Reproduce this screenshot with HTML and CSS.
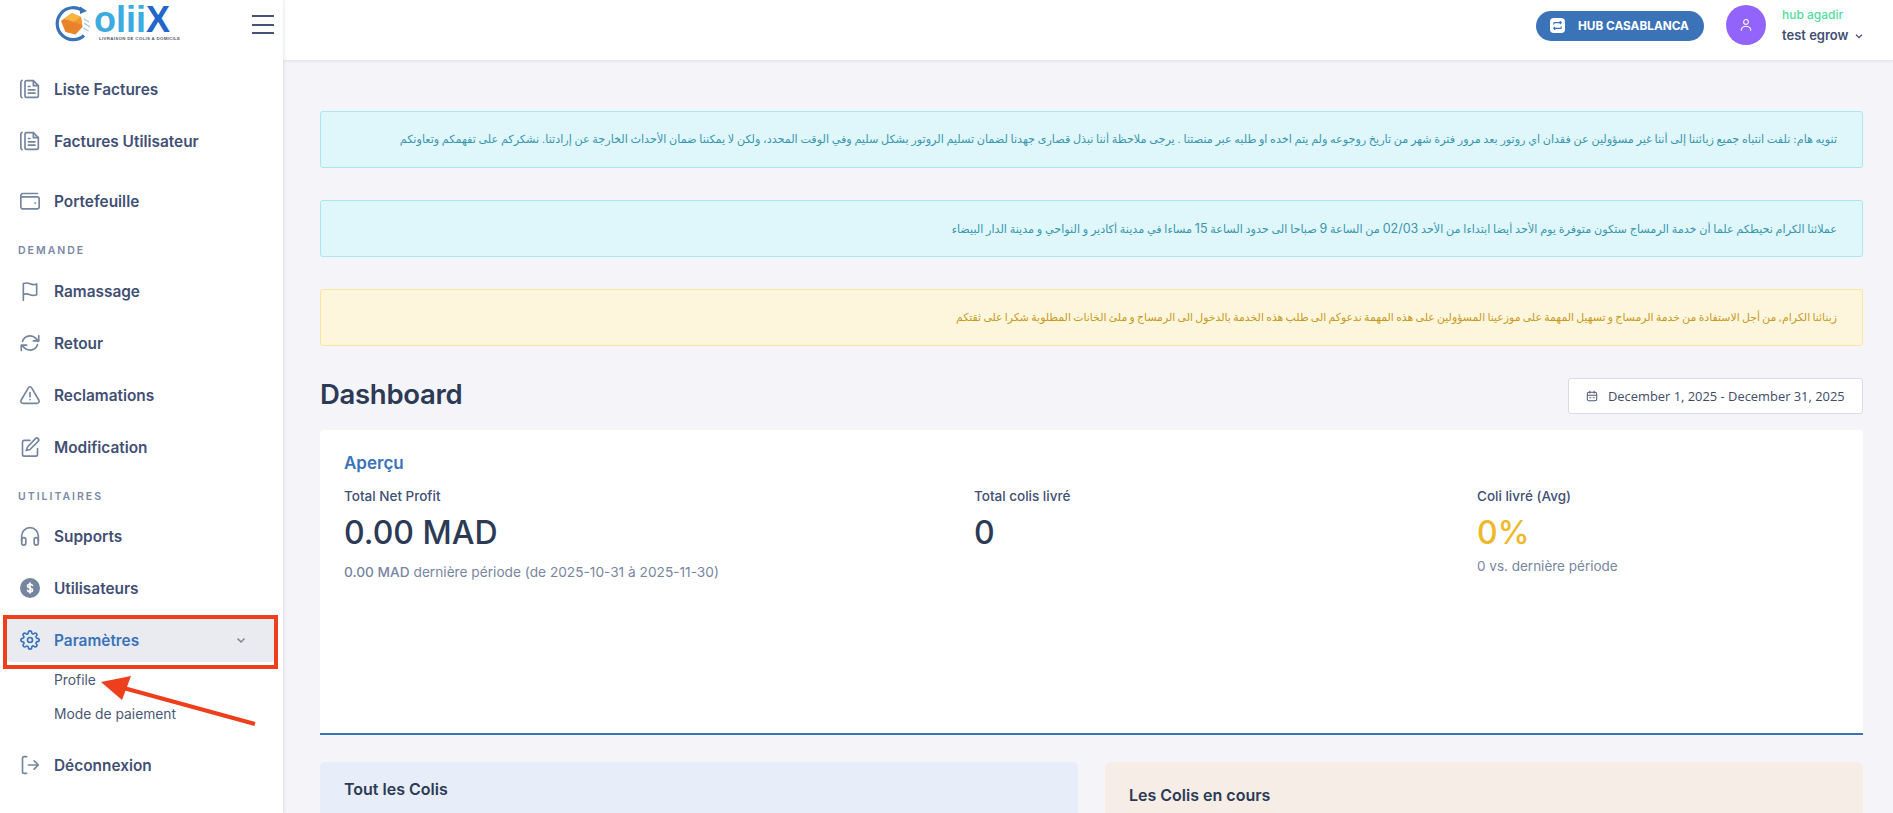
FILE: index.html
```html
<!DOCTYPE html>
<html lang="fr">
<head>
<meta charset="utf-8">
<title>Coliix Dashboard</title>
<link rel="stylesheet" href="styles.css">
</head>
<body>
<div class="app">
  <aside class="sidebar">
    <div class="brand">
      <div class="logo">
        <svg class="logo-mark" viewBox="0 0 38 36" width="38" height="36">
          <path d="M29 5A16 16 0 1 0 30 29.500" fill="none" stroke="#3a73b8" stroke-width="3.200"/>
          <path d="M26 0.500l7 4.500-7 3z" fill="#3a73b8"/>
          <path d="M18 7l9 4 1.500 10-7 7.500-10-2.500L7 15z" fill="#e8832a"/>
          <path d="M10 13l8-6 9 4-7 5z" fill="#f7b53f"/>
          <path d="M20 16l7-5 1 8z" fill="#ef9a30"/>
          <path d="M30 13l5 3M30 17l6 4M29.500 22l5 3" stroke="#a7c8e8" stroke-width="1.400" fill="none"/>
        </svg>
        <div class="logo-text">
          <div class="logo-word"><span class="logo-light">olii</span><span class="logo-dark">X</span></div>
          <div class="logo-tag">LIVRAISON DE COLIS A DOMICILE</div>
        </div>
      </div>
      <div class="burger"><span></span><span></span><span></span></div>
    </div>
    <nav class="nav">
      <a class="item first">
        <svg class="ico" viewBox="0 0 24 24"><path d="M2.500 1.500C1.500 2 1 3 1 4v16c0 1 .5 2 1.500 2.500"/><path d="M6 4a2 2 0 0 1 2-2h8l6 6v12a2 2 0 0 1-2 2H8a2 2 0 0 1-2-2z"/><path d="M10 9h2M10 13h8M10 17h8M16 2v6h6"/></svg>
        <span>Liste Factures</span>
      </a>
      <a class="item">
        <svg class="ico" viewBox="0 0 24 24"><path d="M2.500 1.500C1.500 2 1 3 1 4v16c0 1 .5 2 1.500 2.500"/><path d="M6 4a2 2 0 0 1 2-2h8l6 6v12a2 2 0 0 1-2 2H8a2 2 0 0 1-2-2z"/><path d="M10 9h2M10 13h8M10 17h8M16 2v6h6"/></svg>
        <span>Factures Utilisateur</span>
      </a>
      <a class="item wallet">
        <svg class="ico" viewBox="0 0 24 24"><path d="M21 3H3.500A2.500 2.500 0 0 0 1 5.500V19a2.500 2.500 0 0 0 2.500 2.500h17A2.500 2.500 0 0 0 23 19V9.500A2.500 2.500 0 0 0 20.500 7H1.500"/><path d="M18 14.500h.5"/></svg>
        <span>Portefeuille</span>
      </a>
      <div class="section">DEMANDE</div>
      <a class="item">
        <svg class="ico" viewBox="0 0 24 24"><path d="M4 23V3c3-1 5.500-.8 8 .3s5 1.500 8 .2v13c-3 1.200-5.500 1-8-.1s-5-1.300-8-.4"/></svg>
        <span>Ramassage</span>
      </a>
      <a class="item">
        <svg class="ico" viewBox="0 0 24 24"><path d="M3 10a9.500 9.500 0 0 1 16-3.500l3 3.500M22.500 3v6.500H16M21 14a9.500 9.500 0 0 1-16 3.500L2 14.500M1.500 21v-6.500H8"/></svg>
        <span>Retour</span>
      </a>
      <a class="item">
        <svg class="ico" viewBox="0 0 24 24"><path d="M10 3.500L1.500 18c-1.200 2.200 0 4 2.500 4h16c2.500 0 3.700-1.800 2.500-4L14 3.500c-1-1.900-3-1.900-4 0z"/><path d="M12 9v5M12 17.500v.2"/></svg>
        <span>Reclamations</span>
      </a>
      <a class="item">
        <svg class="ico" viewBox="0 0 24 24"><path d="M12 4H5a2 2 0 0 0-2 2v15a2 2 0 0 0 2 2h14a2 2 0 0 0 2-2v-7"/><path d="M18.500 2a2.300 2.300 0 0 1 3.300 3.300L12 15l-4.500 1.200L9 12z"/></svg>
        <span>Modification</span>
      </a>
      <div class="section util">UTILITAIRES</div>
      <a class="item">
        <svg class="ico" viewBox="0 0 24 24"><path d="M2 18v-6a10 10 0 0 1 20 0v6"/><rect x="2" y="14" width="5" height="9" rx="2.500"/><rect x="17" y="14" width="5" height="9" rx="2.500"/></svg>
        <span>Supports</span>
      </a>
      <a class="item">
        <svg class="ico" viewBox="0 0 24 24"><circle class="ico-fill" cx="12" cy="12" r="12"/><path class="ico-knock" d="M15 9c-.5-1-1.500-1.500-3-1.500-1.700 0-3 .8-3 2.200 0 3 6 1.600 6 4.600 0 1.400-1.300 2.200-3 2.200-1.500 0-2.600-.6-3-1.600M12 6v12"/></svg>
        <span>Utilisateurs</span>
      </a>
      <div class="active-wrap">
        <a class="item active">
          <svg class="ico" viewBox="0 0 24 24"><circle cx="12" cy="12" r="3"/><path d="M19.400 15a1.650 1.650 0 0 0 .33 1.820l.06.06a2 2 0 0 1 0 2.830 2 2 0 0 1-2.830 0l-.06-.06a1.650 1.650 0 0 0-1.820-.33 1.650 1.650 0 0 0-1 1.510V21a2 2 0 0 1-2 2 2 2 0 0 1-2-2v-.09A1.650 1.650 0 0 0 9 19.400a1.650 1.650 0 0 0-1.820.33l-.06.06a2 2 0 0 1-2.830 0 2 2 0 0 1 0-2.830l.06-.06a1.650 1.650 0 0 0 .33-1.820 1.650 1.650 0 0 0-1.510-1H3a2 2 0 0 1-2-2 2 2 0 0 1 2-2h.09A1.650 1.650 0 0 0 4.600 9a1.650 1.650 0 0 0-.33-1.820l-.06-.06a2 2 0 0 1 0-2.830 2 2 0 0 1 2.830 0l.06.06a1.650 1.650 0 0 0 1.820.33H9a1.650 1.650 0 0 0 1-1.510V3a2 2 0 0 1 2-2 2 2 0 0 1 2 2v.09a1.650 1.650 0 0 0 1 1.510 1.650 1.650 0 0 0 1.820-.33l.06-.06a2 2 0 0 1 2.830 0 2 2 0 0 1 0 2.830l-.06.06a1.650 1.650 0 0 0-.33 1.820V9a1.650 1.650 0 0 0 1.510 1H21a2 2 0 0 1 2 2 2 2 0 0 1-2 2h-.09a1.650 1.650 0 0 0-1.510 1z"/></svg>
          <span>Paramètres</span>
          <svg class="chev" viewBox="0 0 12 12"><path d="M2.500 4.500L6 8l3.500-3.500"/></svg>
        </a>
      </div>
      <a class="sub">Profile</a>
      <a class="sub">Mode de paiement</a>
      <a class="item last">
        <svg class="ico" viewBox="0 0 24 24"><path d="M8 2H5a2 2 0 0 0-2 2v16a2 2 0 0 0 2 2h3M10 12h12M17 7l5 5-5 5"/></svg>
        <span>Déconnexion</span>
      </a>
    </nav>
  </aside>

  <div class="main">
    <header class="topbar">
      <a class="hub-btn">
        <svg class="hub-ico" viewBox="0 0 16 16"><rect x="0" y="0" width="16" height="16" rx="4" fill="#fff"/><path d="M4 7V6a1 1 0 0 1 1-1h7M10.500 3.500L12 5l-1.500 1.500M12 9v1a1 1 0 0 1-1 1H4M5.500 9.500L4 11l1.500 1.500" fill="none" stroke="#3a73b8" stroke-width="1.300"/></svg>
        <span>HUB CASABLANCA</span>
      </a>
      <div class="avatar">
        <svg viewBox="0 0 16 16" width="14" height="14"><circle cx="8" cy="4.500" r="2.700"/><path d="M2.500 14.500c0-3 2.500-5 5.500-5s5.500 2 5.500 5"/></svg>
      </div>
      <div class="user">
        <div class="user-hub">hub agadir</div>
        <div class="user-name">test egrow
          <svg class="user-chev" viewBox="0 0 12 12"><path d="M2.500 4.500L6 8l3.500-3.500"/></svg>
        </div>
      </div>
    </header>

    <main class="content">
      <div class="alert info a1" dir="rtl">تنويه هام: نلفت انتباه جميع زبائننا إلى أننا غير مسؤولين عن فقدان اي روتور بعد مرور فترة شهر من تاريخ روجوعه ولم يتم اخده او طلبه عبر منصتنا . يرجى ملاحظة أننا نبذل قصارى جهدنا لضمان تسليم الروتور بشكل سليم وفي الوقت المحدد، ولكن لا يمكننا ضمان الأحداث الخارجة عن إرادتنا. نشكركم على تفهمكم وتعاونكم</div>
      <div class="alert info a2" dir="rtl"><span>عملائنا الكرام نحيطكم علما أن خدمة الرمساج ستكون متوفرة يوم الأحد أيضا ابتداءا من الأحد <span class="num">02/03</span> من الساعة <span class="num">9</span> صباحا الى حدود الساعة <span class="num">15</span> مساءا في مدينة أكادير و النواحي و مدينة الدار البيضاء</span></div>
      <div class="alert warn a3" dir="rtl">زبنائنا الكرام, من أجل الاستفادة من خدمة الرمساج و تسهيل المهمة على موزعينا المسؤولين على هذه المهمة ندعوكم الى طلب هذه الخدمة بالدخول الى الرمساج و ملئ الخانات المطلوبة شكرا على ثقتكم</div>

      <div class="title-row">
        <h1>Dashboard</h1>
        <div class="date">
          <svg viewBox="0 0 14 14" width="12" height="12"><rect x="1.500" y="2.500" width="11" height="10" rx="2"/><path d="M1.500 6h11M4.500 1v3M9.500 1v3M4 9h2M8 9h2"/></svg>
          <span>December 1, 2025 - December 31, 2025</span>
        </div>
      </div>

      <section class="overview">
        <h2>Aperçu</h2>
        <div class="stats">
          <div class="stat s1">
            <div class="label">Total Net Profit</div>
            <div class="value">0.00 MAD</div>
            <div class="note"><b>0.00 MAD</b> dernière période (de 2025-10-31 à 2025-11-30)</div>
          </div>
          <div class="stat s2">
            <div class="label">Total colis livré</div>
            <div class="value">0</div>
          </div>
          <div class="stat s3">
            <div class="label">Coli livré (Avg)</div>
            <div class="value gold">0%</div>
            <div class="note tight">0 vs. dernière période</div>
          </div>
        </div>
      </section>

      <div class="cards">
        <div class="card blue"><h3>Tout les Colis</h3></div>
        <div class="card beige"><h3>Les Colis en cours</h3></div>
      </div>
    </main>
  </div>
</div>

<div class="mark-box"></div>
<svg class="mark-arrow" viewBox="0 0 160 50" width="160" height="50">
  <path d="M157 48L22 11" stroke="#ee3f1c" stroke-width="4" fill="none"/>
  <path d="M3 6L33 0L24 24z" fill="#ee3f1c"/>
</svg>
</body>
</html>
```
FILE: styles.css
```css
* { box-sizing: border-box; }
html, body { margin: 0; padding: 0; height: 813px; overflow: hidden; }
body { font-family: Inter, "Noto Sans", sans-serif; background: #f4f4f9; color: #2c3a55; position: relative; }
a { display: flex; text-decoration: none; }

.app { display: flex; height: 813px; }

.sidebar { width: 283px; flex: none; background: #fff; box-shadow: 1px 0 3px rgba(60, 70, 110, .12); position: relative; z-index: 2; }
.brand { height: 60px; display: flex; align-items: flex-start; justify-content: space-between; padding: 0 9px 0 54px; }
.logo { display: flex; align-items: flex-start; padding-top: 6px; gap: 2px; }
.logo-mark { flex: none; }
.logo-word { font-family: "Liberation Sans", sans-serif; font-weight: 700; font-size: 36px; line-height: 27px; }
.logo-light { color: #3cabe0; }
.logo-dark { color: #2166c9; }
.logo-tag { font-family: "Liberation Sans", sans-serif; font-size: 4.4px; font-weight: 700; color: #555c6c; white-space: nowrap; letter-spacing: .3px; margin-left: 5px; margin-top: 3px; }
.burger { width: 22px; margin-top: 15px; display: flex; flex-direction: column; gap: 6.5px; }
.burger span { display: block; height: 2px; background: #45537a; }

.nav { display: flex; flex-direction: column; }
.item { height: 52px; align-items: center; padding-left: 20px; color: #424f75; font-size: 15.4px; font-weight: 600; flex: none; }
.item span { margin-left: 14px; }
.first { margin-top: 3px; }
.wallet { margin-top: 8px; }
.ico { width: 20px; height: 20px; fill: none; stroke: #76859f; stroke-width: 2; stroke-linecap: round; stroke-linejoin: round; flex: none; overflow: visible; }
.ico-fill { fill: #76859f; stroke: none; }
.ico-knock { stroke: #fff; stroke-width: 2; }
.section { font-size: 10.5px; font-weight: 600; letter-spacing: 2px; color: #7a88a6; padding-left: 18px; height: 16px; line-height: 16px; margin: 16px 0 6px; }
.section.util { margin-bottom: 5px; }

.active-wrap { padding: 0 6px; height: 44px; margin: 4px 0 1px; flex: none; }
.active { height: 44px; background: #e9ebf0; border-radius: 5px; color: #3a73b8; padding-left: 14px; }
.active .ico { stroke: #3a73b8; }
.chev { width: 12px; height: 12px; margin-left: auto; margin-right: 30px; fill: none; stroke: #76859f; stroke-width: 1.5; }
.sub { height: 34px; align-items: center; padding-left: 54px; color: #4a5775; font-size: 13.8px; flex: none; }
.last { margin-top: 8px; }

.main { flex: 1; min-width: 0; display: flex; flex-direction: column; }
.topbar { height: 60px; flex: none; background: #fff; box-shadow: 0 1px 3px rgba(60, 70, 110, .12); display: flex; align-items: center; justify-content: flex-end; padding-right: 30px; }
.hub-btn { height: 30px; width: 168px; background: #3a73b8; border-radius: 15px; align-items: center; padding-left: 14px; color: #fff; font-size: 11.8px; font-weight: 700; margin-right: 22px; margin-top: -9px; }
.hub-ico { width: 15px; height: 15px; margin-right: 13px; flex: none; }
.avatar { width: 40px; height: 40px; border-radius: 50%; background: #9364fb; display: flex; align-items: center; justify-content: center; margin-right: 16px; margin-top: -10px; }
.avatar svg { fill: none; stroke: #fff; stroke-width: 1.2; }
.user { width: 81px; margin-top: -8px; }
.user-hub { color: #4fdc9b; font-size: 12px; line-height: 16px; font-weight: 500; }
.user-name { color: #424f75; font-size: 13px; line-height: 19px; font-weight: 600; margin-top: 3px; white-space: nowrap; display: flex; align-items: center; }
.user-chev { width: 10px; height: 10px; margin-left: 6px; fill: none; stroke: #424f75; stroke-width: 1.5; flex: none; }

.content { padding: 51px 30px 0 37px; flex: 1; min-height: 0; }
.alert { height: 57px; border-radius: 3px; border: 1px solid; margin-bottom: 32px; display: flex; align-items: center; padding: 0 25px; font-family: "DejaVu Sans", sans-serif; white-space: nowrap; }
.info { background: #dff6fb; border-color: #a8e6f2; color: #3a96ae; }
.warn { background: #fdf6dc; border-color: #fae6a3; color: #c79a1d; margin-bottom: 0; }
.a1 { font-size: 11.2px; word-spacing: -.9px; }
.a2 { font-size: 11.2px; word-spacing: -.8px; }
.a3 { font-size: 10.9px; word-spacing: -1.2px; }
.num { font-family: Inter, sans-serif; font-size: 12.5px; }

.title-row { display: flex; align-items: center; justify-content: space-between; height: 36px; margin-top: 32px; }
h1 { margin: 0; font-size: 27.5px; font-weight: 600; color: #2c3a55; letter-spacing: -.3px; padding-bottom: 4px; }
.date { width: 295px; height: 36px; background: #fff; border: 1px solid #d8dcea; border-radius: 3px; display: flex; align-items: center; padding-left: 17px; color: #404b69; font-size: 12.9px; font-family: "Open Sans", Inter, sans-serif; }
.date svg { fill: none; stroke: #505a78; stroke-width: 1.2; margin-right: 10px; flex: none; }

.overview { height: 305px; margin-top: 16px; background: #fff; border-radius: 4px 4px 0 0; border-bottom: 2px solid #3a73b8; padding: 23px 24px 0; }
h2 { margin: 0; font-size: 17px; line-height: 20px; font-weight: 600; color: #3a73b8; }
.stats { display: flex; margin-top: 14px; }
.stat.s1 { width: 630px; }
.stat.s2 { width: 503px; }
.label { font-size: 13.5px; line-height: 18px; font-weight: 500; color: #424f75; }
.value { font-size: 32px; line-height: 40px; font-weight: 500; color: #2c3a55; margin-top: 8px; }
.gold { color: #efb72a; }
.note { font-size: 13.7px; line-height: 18px; color: #7886a2; margin-top: 10px; }
.note.tight { margin-top: 4px; font-size: 13.5px; }
.note b { font-weight: 500; }

.cards { display: flex; gap: 27px; margin-top: 27px; }
.card { flex: 1; height: 51px; border-radius: 5px 5px 0 0; padding: 17px 24px 0; }
.blue { background: #e7edf9; }
.beige { background: #f5ede6; padding-top: 23px; }
h3 { margin: 0; font-size: 16px; line-height: 20px; font-weight: 600; color: #2c3a55; }

.mark-box { position: absolute; left: 3px; top: 615px; width: 275px; height: 54px; border: 4px solid #ee3f1c; z-index: 5; }
.mark-arrow { position: absolute; left: 98px; top: 676px; z-index: 5; }
```
